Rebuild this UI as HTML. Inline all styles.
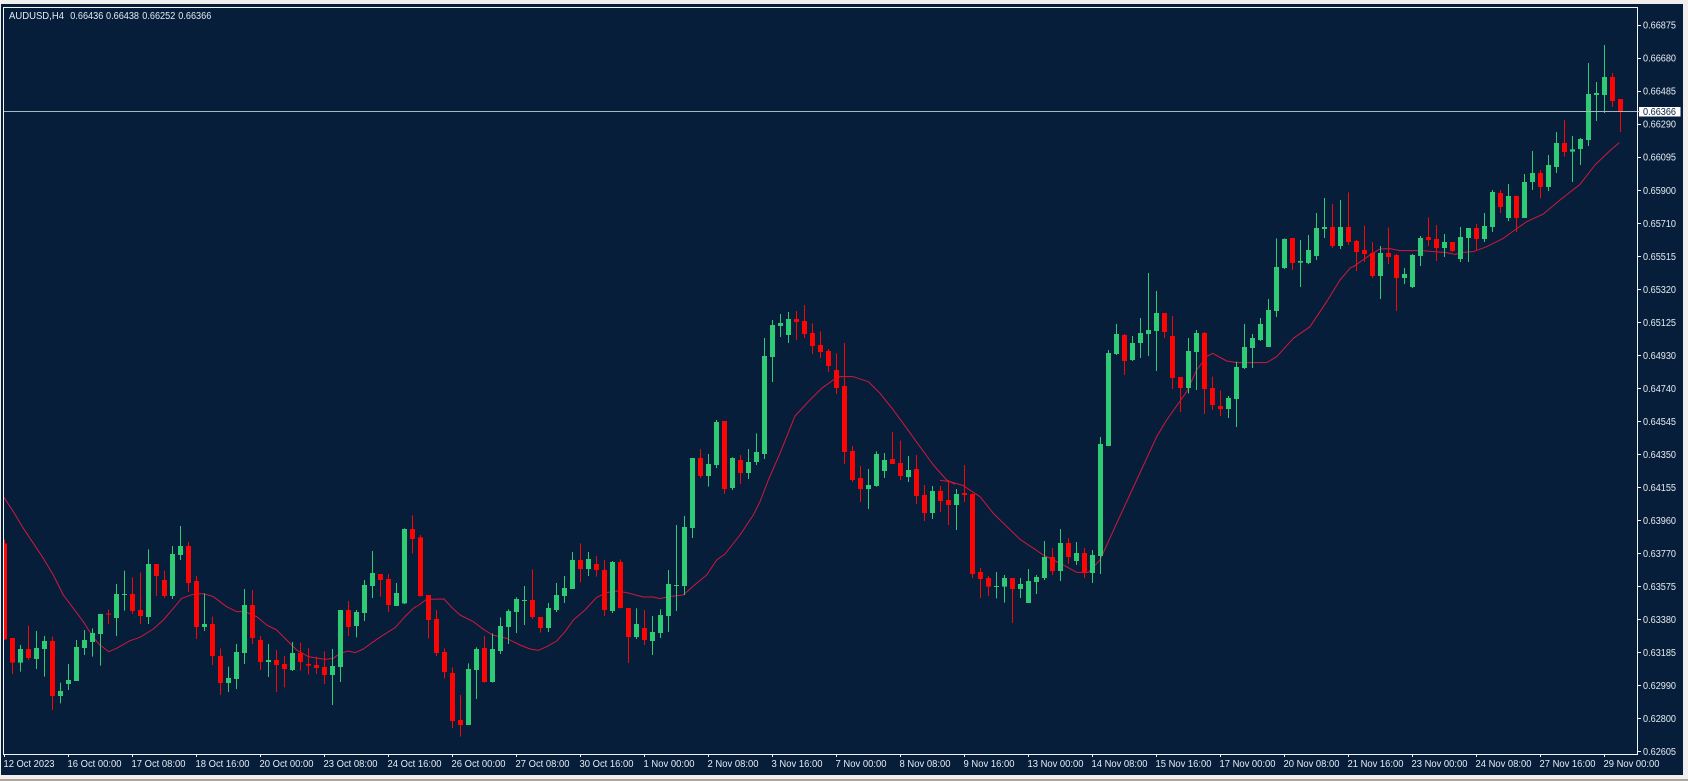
<!DOCTYPE html>
<html><head><meta charset="utf-8"><title>AUDUSD,H4</title>
<style>html,body{margin:0;padding:0;background:#eceae6;width:1688px;height:781px;overflow:hidden}svg{display:block}text{font-family:"Liberation Sans",sans-serif;font-size:10px;fill:#e6ebf0}</style></head>
<body>
<svg width="1688" height="781" viewBox="0 0 1688 781" xmlns="http://www.w3.org/2000/svg">
<rect width="1688" height="781" fill="#f0efed"/>
<rect y="779" width="1688" height="2" fill="#aaa69f"/>
<rect x="1" y="4" width="1682" height="771" fill="#061e3a"/>
<g fill="none" stroke="#d3173c" stroke-width="3" stroke-linejoin="round">
<path transform="translate(0 480) scale(.33333)" d="M12 52L40 95 70 145 100 190 130 235 160 285 190 345 220 385 250 425 278 470 300 495 326 515 350 505 390 482 420 472 460 447 490 420 520 385 545 355 580 343 610 341 640 350 680 380 710 395 735 395 770 410 800 435 830 450 860 480 890 510 925 530 975 538 1000 535 1020 520 1045 513 1065 518 1090 507 1120 485 1150 465 1185 443 1215 410 1240 385 1262 372"/>
<path transform="translate(420 480) scale(.33333)" d="M0 372L20 358 72 357 95 382 120 405 160 425 190 448 218 465 260 475 300 495 330 507 355 511 380 500 410 483 435 455 460 420 495 390 530 352 560 338 590 333 620 338 670 351 700 351 720 356 745 350 790 345 820 318 860 285 890 240 915 222 960 165 1000 105 1020 65 1045 0"/>
<path transform="translate(680 290) scale(.33333)" d="M265 570L300 490 345 378 385 335 425 295 460 270 480 260 520 260 565 275 600 310 640 360 680 415 720 470 760 525 800 570 825 583"/>
<path transform="translate(950 260) scale(.33333)" d="M-30 661L0 665 40 677 90 710 130 760 210 838 280 885 340 915 380 937 415 937 450 900 500 790 560 660 620 530 650 480 710 395 740 330 770 290 788 280 830 303 860 308 950 308 980 290 1030 235 1080 200 1130 125 1170 60 1200 25"/>
<path transform="translate(1270 30) scale(.33333)" d="M240 714L250 710 300 675 330 657 360 656 390 662 440 662 470 663 530 668 555 673 580 667 610 665 650 650 700 625 730 603 770 575 820 552 870 510 930 463 975 405 1020 362 1048 338"/>
</g>
<g fill="none">
<g transform="translate(-.167 480) scale(.33333)">
<path stroke="#2ecb74" stroke-width="3" d="M62 495V575M110 453V567M134 468V590M182 608V670M206 552V630M230 480V603M254 450V525M278 445V530M302 402V557M350 312V468M374 272V392M446 208V432M518 198V357M542 138V240M614 340V453M686 560V636M710 492V627M734 327V552M806 492V591M878 486V573M998 507V675M1022 390V606M1070 390V472M1094 300V423M1118 213V354M1190 309V378M1214 145V372"/>
<path stroke="#2ecb74" stroke-width="15" d="M62 507V548M110 504V537M134 483V507M182 633V648M206 600V612M230 501V603M254 480V504M278 459V486M302 402V462M350 342V414M374 342V345M446 252V411M518 222V348M542 198V225M614 432V441M686 594V609M710 516V597M734 375V519M806 540V546M878 519V570M998 558V585M1022 390V561M1070 396V438M1094 315V399M1118 279V318M1190 339V378M1214 147V370"/>
<path stroke="#fb0505" stroke-width="3" d="M14 178V480M38 474V582M86 437V540M158 470V690M326 388V432M398 292V402M422 277V432M470 252V348M494 272V354M566 186V336M590 288V477M638 410V555M662 505V645M758 330V492M782 468V570M830 510V636M854 528V622M902 488V572M926 504V583M950 530V582M974 514V612M1046 363V468M1142 282V350M1166 282V396M1238 106V220"/>
<path stroke="#fb0505" stroke-width="15" d="M14 190V478M38 474V548M86 507V534M158 483V648M326 401V404M398 342V393M422 390V408M470 252V288M494 300V348M566 198V309M590 303V441M638 432V528M662 528V609M758 375V474M782 480V546M830 540V555M854 552V567M902 519V546M926 552V557M950 555V564M974 561V585M1046 390V441M1142 282V300M1166 297V375M1238 147V177"/>
</g>
<g transform="translate(419.833 480) scale(.33333)">
<path stroke="#2ecb74" stroke-width="3" d="M146 550V735M170 502V657M218 460V608M242 412V522M266 388V492M290 352V459M314 318V435M386 369V456M410 309V396M434 288V369M458 216V327M506 216V288M578 243V399M650 385V477M698 408V525M722 388V474M746 270V456M770 135V393M794 108V345"/>
<path stroke="#2ecb74" stroke-width="15" d="M146 567V735M170 507V570M218 507V606M242 438V513M266 393V441M290 357V396M314 360V363M386 384V444M410 345V390M434 324V348M458 240V327M506 237V267M578 246V393M650 432V471M698 456V483M722 405V459M746 312V408M770 315V318M794 141V318"/>
<path stroke="#fb0505" stroke-width="3" d="M2 165V350M26 345V475M50 390V528M74 505V595M98 562V744M122 645V770M194 468V608M338 268V417M362 411V458M482 190V307M530 228V290M554 240V408M602 238V385M626 384V549M674 390V495"/>
<path stroke="#fb0505" stroke-width="15" d="M2 172V348M26 345V420M50 417V519M74 516V576M98 579V723M122 720V735M194 504V606M338 360V411M362 411V444M482 240V267M530 252V270M554 270V390M602 246V384M626 384V471M674 444V480"/>
</g>
<g transform="translate(679.833 290) scale(.33333)">
<path stroke="#2ecb74" stroke-width="3" d="M38 504V744M86 492V590M110 390V534M158 502V600M206 477V567M230 430V525M254 144V507M278 90V276M302 72V141M326 66V159M566 537V657M590 484V590M614 489V564M686 498V576M758 588V687M830 597V720"/>
<path stroke="#2ecb74" stroke-width="15" d="M38 504V714M86 522V558M110 396V525M158 504V594M206 516V549M230 486V516M254 198V492M278 105V201M302 99V108M326 87V135M566 585V597M590 492V588M614 510V543M686 540V561M758 603V669M830 612V645"/>
<path stroke="#fb0505" stroke-width="3" d="M62 477V564M134 393V612M182 495V582M350 63V150M374 45V144M398 100V192M422 124V204M446 177V246M470 190V312M494 159V522M518 468V576M542 528V636M638 426V522M662 452V570M710 495V642M734 585V693M782 588V666M806 570V705M854 525V636"/>
<path stroke="#fb0505" stroke-width="15" d="M62 504V558M134 393V597M182 510V549M350 87V96M374 93V132M398 129V168M422 165V186M446 183V228M470 240V294M494 288V486M518 483V570M542 564V597M638 507V522M662 519V558M710 537V618M734 615V669M782 603V633M806 630V645M854 609V615"/>
</g>
<g transform="translate(949.833 260) scale(.33333)">
<path stroke="#2ecb74" stroke-width="3" d="M140 936V1015M164 945V1028M212 954V1014M236 927V1029M260 945V1002M284 843V960M332 807V963M380 846V915M428 870V969M452 531V942M476 270V558M500 192V285M548 228V303M572 174V294M596 39V288M620 93V333M716 234V400M740 210V390M836 408V474M860 305V501M884 192V327M908 222V324M932 174V243M956 117V261"/>
<path stroke="#2ecb74" stroke-width="15" d="M140 978V981M164 954V980M212 972V987M236 963V1029M260 951V966M284 891V954M332 849V933M380 879V903M428 885V939M452 552V888M476 279V558M500 222V282M548 249V300M572 219V249M596 210V222M620 159V213M716 273V384M740 219V276M836 414V447M860 321V417M884 261V324M908 234V264M932 192V240M956 150V261"/>
<path stroke="#fb0505" stroke-width="3" d="M68 700V954M92 924V1014M116 948V1008M188 954V1089M308 864V945M356 834V912M404 864V954M524 222V345M644 159V234M668 168V387M692 351V456M764 216V462M788 350V450M812 392V468"/>
<path stroke="#fb0505" stroke-width="15" d="M68 702V942M92 936V957M116 954V980M188 954V987M308 891V933M356 849V891M404 879V939M524 225V303M644 159V216M668 228V354M692 351V384M764 219V387M788 384V435M812 438V447"/>
</g>
<g transform="translate(1269.833 30) scale(.33333)">
<path stroke="#2ecb74" stroke-width="3" d="M20 625V861M44 625V717M92 630V771M116 615V702M140 549V690M164 504V624M212 510V657M332 648V807M404 714V762M428 672V774M452 618V708M524 612V681M572 591V696M596 594V696M644 549V636M668 480V606M716 462V573M764 432V564M788 363V480M836 375V483M860 306V429M908 318V456M932 324V405M956 99V348M980 156V273M1004 45V249"/>
<path stroke="#2ecb74" stroke-width="15" d="M20 711V843M44 627V714M92 693V698M116 660V699M140 594V678M164 591V597M212 591V648M332 669V738M404 732V744M428 675V771M452 624V678M524 636V654M572 621V687M596 594V624M644 588V627M668 486V591M716 498V564M764 456V564M788 429V456M836 405V471M860 339V411M908 358V365M932 327V357M956 192V330M980 189V195M1004 141V195"/>
<path stroke="#fb0505" stroke-width="3" d="M68 624V720M188 522V654M236 487V645M260 630V723M284 587V696M308 636V744M356 593V702M380 672V843M476 562V648M500 585V693M548 636V666M620 582V663M692 480V549M740 497V606M812 420V505M884 270V380M1028 129V231M1052 207V306"/>
<path stroke="#fb0505" stroke-width="15" d="M68 624V699M188 591V648M236 591V636M260 633V666M284 660V672M308 669V738M356 669V681M380 675V744M476 621V630M500 627V654M548 636V663M620 594V627M692 489V531M740 498V564M812 429V471M884 339V366M1028 141V213M1052 207V246"/>
</g>
</g>
<rect x="1" y="7" width="2" height="747" fill="#061e3a"/>
<path d="M4 111.5H1637" stroke="#a5b8c4" stroke-width="1"/>
<path d="M3.5 7V754.5H1637.5V7.5H3.5" fill="none" stroke="#f2f5f7" stroke-width="1"/>
<path stroke="#f2f5f7" stroke-width="1" fill="none" d="M4.5 754v3M68.5 754v3M132.5 754v3M196.5 754v3M260.5 754v3M324.5 754v3M388.5 754v3M452.5 754v3M516.5 754v3M580.5 754v3M644.5 754v3M708.5 754v3M772.5 754v3M836.5 754v3M900.5 754v3M964.5 754v3M1028.5 754v3M1092.5 754v3M1156.5 754v3M1220.5 754v3M1284.5 754v3M1348.5 754v3M1412.5 754v3M1476.5 754v3M1540.5 754v3M1604.5 754v3M1638 25.5h3M1638 58.5h3M1638 91.5h3M1638 124.5h3M1638 157.5h3M1638 190.5h3M1638 223.5h3M1638 256.5h3M1638 289.5h3M1638 322.5h3M1638 355.5h3M1638 388.5h3M1638 421.5h3M1638 454.5h3M1638 487.5h3M1638 520.5h3M1638 553.5h3M1638 586.5h3M1638 619.5h3M1638 652.5h3M1638 685.5h3M1638 718.5h3M1638 751.5h3"/>
<text x="9" y="19.2" textLength="55" lengthAdjust="spacingAndGlyphs">AUDUSD,H4</text>
<text x="70.3" y="19.2" textLength="33" lengthAdjust="spacingAndGlyphs">0.66436</text>
<text x="106" y="19.2" textLength="33" lengthAdjust="spacingAndGlyphs">0.66438</text>
<text x="142.3" y="19.2" textLength="33" lengthAdjust="spacingAndGlyphs">0.66252</text>
<text x="178.3" y="19.2" textLength="33" lengthAdjust="spacingAndGlyphs">0.66366</text>
<g>
<text x="1643" y="28.6" textLength="33" lengthAdjust="spacingAndGlyphs">0.66875</text>
<text x="1643" y="61.6" textLength="33" lengthAdjust="spacingAndGlyphs">0.66680</text>
<text x="1643" y="94.7" textLength="33" lengthAdjust="spacingAndGlyphs">0.66485</text>
<text x="1643" y="127.7" textLength="33" lengthAdjust="spacingAndGlyphs">0.66290</text>
<text x="1643" y="160.7" textLength="33" lengthAdjust="spacingAndGlyphs">0.66095</text>
<text x="1643" y="193.8" textLength="33" lengthAdjust="spacingAndGlyphs">0.65900</text>
<text x="1643" y="226.8" textLength="33" lengthAdjust="spacingAndGlyphs">0.65710</text>
<text x="1643" y="259.8" textLength="33" lengthAdjust="spacingAndGlyphs">0.65515</text>
<text x="1643" y="292.8" textLength="33" lengthAdjust="spacingAndGlyphs">0.65320</text>
<text x="1643" y="325.9" textLength="33" lengthAdjust="spacingAndGlyphs">0.65125</text>
<text x="1643" y="358.9" textLength="33" lengthAdjust="spacingAndGlyphs">0.64930</text>
<text x="1643" y="391.9" textLength="33" lengthAdjust="spacingAndGlyphs">0.64740</text>
<text x="1643" y="424.9" textLength="33" lengthAdjust="spacingAndGlyphs">0.64545</text>
<text x="1643" y="458" textLength="33" lengthAdjust="spacingAndGlyphs">0.64350</text>
<text x="1643" y="491" textLength="33" lengthAdjust="spacingAndGlyphs">0.64155</text>
<text x="1643" y="524" textLength="33" lengthAdjust="spacingAndGlyphs">0.63960</text>
<text x="1643" y="557.1" textLength="33" lengthAdjust="spacingAndGlyphs">0.63770</text>
<text x="1643" y="590.1" textLength="33" lengthAdjust="spacingAndGlyphs">0.63575</text>
<text x="1643" y="623.1" textLength="33" lengthAdjust="spacingAndGlyphs">0.63380</text>
<text x="1643" y="656.1" textLength="33" lengthAdjust="spacingAndGlyphs">0.63185</text>
<text x="1643" y="689.2" textLength="33" lengthAdjust="spacingAndGlyphs">0.62990</text>
<text x="1643" y="722.2" textLength="33" lengthAdjust="spacingAndGlyphs">0.62800</text>
<text x="1643" y="755.2" textLength="33" lengthAdjust="spacingAndGlyphs">0.62605</text>
</g>
<rect x="1639" y="107" width="41.5" height="9.5" fill="#ffffff"/>
<path d="M1638 111.5h2" stroke="#a5b8c4"/>
<text x="1643" y="115.2" textLength="33" lengthAdjust="spacingAndGlyphs" style="fill:#061e3a">0.66366</text>
<g>
<text x="3.5" y="766.8" textLength="51" lengthAdjust="spacingAndGlyphs">12 Oct 2023</text>
<text x="67.5" y="766.8" textLength="54" lengthAdjust="spacingAndGlyphs">16 Oct 00:00</text>
<text x="131.5" y="766.8" textLength="54" lengthAdjust="spacingAndGlyphs">17 Oct 08:00</text>
<text x="195.5" y="766.8" textLength="54" lengthAdjust="spacingAndGlyphs">18 Oct 16:00</text>
<text x="259.5" y="766.8" textLength="54" lengthAdjust="spacingAndGlyphs">20 Oct 00:00</text>
<text x="323.5" y="766.8" textLength="54" lengthAdjust="spacingAndGlyphs">23 Oct 08:00</text>
<text x="387.5" y="766.8" textLength="54" lengthAdjust="spacingAndGlyphs">24 Oct 16:00</text>
<text x="451.5" y="766.8" textLength="54" lengthAdjust="spacingAndGlyphs">26 Oct 00:00</text>
<text x="515.5" y="766.8" textLength="54" lengthAdjust="spacingAndGlyphs">27 Oct 08:00</text>
<text x="579.5" y="766.8" textLength="54" lengthAdjust="spacingAndGlyphs">30 Oct 16:00</text>
<text x="643.5" y="766.8" textLength="51" lengthAdjust="spacingAndGlyphs">1 Nov 00:00</text>
<text x="707.5" y="766.8" textLength="51" lengthAdjust="spacingAndGlyphs">2 Nov 08:00</text>
<text x="771.5" y="766.8" textLength="51" lengthAdjust="spacingAndGlyphs">3 Nov 16:00</text>
<text x="835.5" y="766.8" textLength="51" lengthAdjust="spacingAndGlyphs">7 Nov 00:00</text>
<text x="899.5" y="766.8" textLength="51" lengthAdjust="spacingAndGlyphs">8 Nov 08:00</text>
<text x="963.5" y="766.8" textLength="51" lengthAdjust="spacingAndGlyphs">9 Nov 16:00</text>
<text x="1027.5" y="766.8" textLength="56" lengthAdjust="spacingAndGlyphs">13 Nov 00:00</text>
<text x="1091.5" y="766.8" textLength="56" lengthAdjust="spacingAndGlyphs">14 Nov 08:00</text>
<text x="1155.5" y="766.8" textLength="56" lengthAdjust="spacingAndGlyphs">15 Nov 16:00</text>
<text x="1219.5" y="766.8" textLength="56" lengthAdjust="spacingAndGlyphs">17 Nov 00:00</text>
<text x="1283.5" y="766.8" textLength="56" lengthAdjust="spacingAndGlyphs">20 Nov 08:00</text>
<text x="1347.5" y="766.8" textLength="56" lengthAdjust="spacingAndGlyphs">21 Nov 16:00</text>
<text x="1411.5" y="766.8" textLength="56" lengthAdjust="spacingAndGlyphs">23 Nov 00:00</text>
<text x="1475.5" y="766.8" textLength="56" lengthAdjust="spacingAndGlyphs">24 Nov 08:00</text>
<text x="1539.5" y="766.8" textLength="56" lengthAdjust="spacingAndGlyphs">27 Nov 16:00</text>
<text x="1603.5" y="766.8" textLength="56" lengthAdjust="spacingAndGlyphs">29 Nov 00:00</text>
</g>
</svg>
</body></html>
